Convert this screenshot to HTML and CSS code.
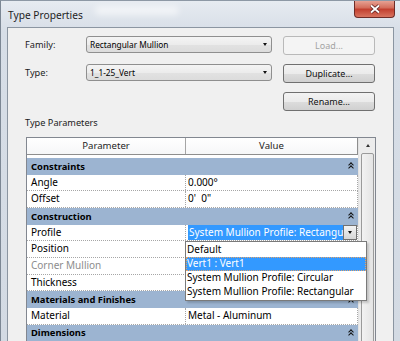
FILE: index.html
```html
<!DOCTYPE html>
<html lang="en">
<head>
    <meta charset="UTF-8">
    <meta name="viewport" content="width=device-width, initial-scale=1.0">
    <title>Type Properties</title>
    <link rel="stylesheet" href="styles.css">
</head>
<body>
    <div class="window">
        <div class="titlebar">
            <span class="title">Type Properties</span>
            <span class="ghost"></span>
            <span class="close-btn">
                <svg width="12" height="10" viewBox="0 0 12 10">
                    <path d="M2 1.5 L10 8.5 M10 1.5 L2 8.5" stroke="#5a2020" stroke-width="3.4" fill="none"/>
                    <path d="M2 1.5 L10 8.5 M10 1.5 L2 8.5" stroke="#fff" stroke-width="1.8" fill="none"/>
                </svg>
            </span>
        </div>

        <div class="client">
            <div class="form">
                <label>Family:</label>
                <div class="combo"><span>Rectangular Mullion</span><i class="arrow"></i></div>
                <button class="btn" disabled>Load...</button>

                <label>Type:</label>
                <div class="combo"><span>1_1-25_Vert</span><i class="arrow"></i></div>
                <button class="btn">Duplicate...</button>

                <span></span>
                <span></span>
                <button class="btn">Rename...</button>
            </div>

            <div class="section-label">Type Parameters</div>

            <div class="table">
                <div class="params">
                    <div class="head">
                        <div class="head-name">Parameter</div>
                        <div class="head-value">Value</div>
                    </div>
                    <div class="rows">
                        <div class="group">Constraints <i class="collapse"></i></div>
                        <div class="row"><div class="name">Angle</div><div class="value">0.000°</div></div>
                        <div class="row"><div class="name">Offset</div><div class="value">0'&nbsp; 0"</div></div>

                        <div class="group">Construction <i class="collapse"></i></div>
                        <div class="row">
                            <div class="name">Profile</div>
                            <div class="value">
                                <div class="editor">
                                    <span class="editor-text">System Mullion Profile: Rectangular</span>
                                    <span class="editor-btn"><i class="arrow"></i></span>
                                </div>
                                <ul class="dropdown">
                                    <li>Default</li>
                                    <li class="selected">Vert1 : Vert1</li>
                                    <li>System Mullion Profile: Circular</li>
                                    <li>System Mullion Profile: Rectangular</li>
                                </ul>
                            </div>
                        </div>
                        <div class="row"><div class="name">Position</div><div class="value"></div></div>
                        <div class="row"><div class="name disabled">Corner Mullion</div><div class="value"></div></div>
                        <div class="row"><div class="name">Thickness</div><div class="value"></div></div>

                        <div class="group">Materials and Finishes <i class="collapse"></i></div>
                        <div class="row"><div class="name">Material</div><div class="value">Metal - Aluminum</div></div>

                        <div class="group">Dimensions <i class="collapse"></i></div>
                    </div>
                </div>
                <div class="scrollbar">
                    <div class="scroll-up"><i class="up-arrow"></i></div>
                    <div class="thumb"></div>
                </div>
            </div>
        </div>
    </div>
</body>
</html>
```
FILE: styles.css
```css
html, body {
    margin: 0;
    padding: 0;
    width: 400px;
    height: 341px;
    overflow: hidden;
    background: #dde3ea;
}
body {
    font-family: "Noto Sans", sans-serif;
    color: #000;
}
.window {
    height: 341px;
    box-sizing: border-box;
    border-top: 1px solid #8d98a5;
    border-left: 1px solid #7c8794;
    padding: 0 6px 0 6px;
    background: linear-gradient(#e6ebf1, #d7dee7 30px, #d3dae3);
    overflow: hidden;
}

/* title bar */
.titlebar {
    height: 26px;
    display: flex;
    align-items: flex-start;
}
.title {
    font-size: 10.2px;
    line-height: 12px;
    margin: 8px 0 0 1px;
    color: #1e1e1e;
}
.ghost {
    width: 84px;
    height: 9px;
    margin: 5px 0 0 12px;
    border-radius: 5px;
    background: rgba(255, 255, 255, 0.55);
    filter: blur(3px);
}
.close-btn {
    margin-left: auto;
    margin-right: -1px;
    margin-top: -1px;
    width: 41px;
    height: 18px;
    box-sizing: border-box;
    border: 1px solid #6e2c27;
    border-top: none;
    border-radius: 0 0 4px 4px;
    background: linear-gradient(#e9a99b, #d46e5c 45%, #c2402f 55%, #d8735f);
    display: flex;
    align-items: center;
    justify-content: center;
}

/* dialog client area */
.client {
    height: 314px;
    background: #f0f0f0;
    border: 1px solid #8b95a1;
    border-bottom: none;
    overflow: hidden;
}

.form {
    display: grid;
    grid-template-columns: 50px 186px 92px;
    grid-auto-rows: 18px;
    column-gap: 11px;
    row-gap: 10px;
    margin: 8px 0 0 17px;
}
.form label {
    font-size: 9.2px;
    line-height: 18px;
    color: #1b1b1b;
}
.combo {
    height: 17px;
    box-sizing: border-box;
    border: 1px solid #8f8f8f;
    border-radius: 3px;
    background: linear-gradient(#f4f4f4, #ececec 50%, #e2e2e2 51%, #dcdcdc);
    display: flex;
    align-items: center;
    padding: 0 4px 0 3px;
    font-size: 8.3px;
}
.combo span {
    flex: 1;
}
.arrow {
    width: 0;
    height: 0;
    border-left: 2.5px solid transparent;
    border-right: 2.5px solid transparent;
    border-top: 3px solid #111;
}
.btn {
    height: 19px;
    margin: 0;
    padding: 0;
    font-family: "Noto Sans", sans-serif;
    font-size: 9px;
    color: #111;
    border: 1px solid #707070;
    border-radius: 3px;
    background: linear-gradient(#f3f3f3, #ebebeb 50%, #dddddd 51%, #d0d0d0);
}
.btn:disabled {
    color: #a3a3a3;
    border-color: #b9b9b9;
    background: #f4f4f4;
}

.section-label {
    margin: 6px 0 0 17px;
    font-size: 9.2px;
    line-height: 14px;
    color: #1b1b1b;
}

/* property grid */
.table {
    margin: 7px 0 0 18px;
    width: 350px;
    height: 204px;
    box-sizing: border-box;
    border: 1px solid #828790;
    border-bottom: none;
    background: #fff;
    display: flex;
    overflow: hidden;
}
.params {
    width: 331px;
    flex: none;
    font-size: 10px;
}
.head {
    display: flex;
    height: 17px;
    box-sizing: border-box;
    border-bottom: 1px solid #8e8e8e;
    border-right: 1px solid #8e8e8e;
    background: linear-gradient(#ffffff, #f6f7f8);
    font-size: 9.6px;
    line-height: 16px;
    color: #1e1e1e;
}
.head-name {
    width: 158px;
    flex: none;
    border-right: 1px solid #a5a5a5;
    text-align: center;
}
.head-value {
    flex: 1;
    text-align: center;
}
.rows {
    margin-top: 3px;
}
.group {
    height: 16.67px;
    display: flex;
    align-items: center;
    padding-left: 4px;
    background: #9cb4d1;
    font-size: 9.4px;
    font-weight: bold;
}
.collapse {
    margin-left: auto;
    margin-right: 5px;
    width: 5px;
    height: 7px;
    position: relative;
}
.collapse::before,
.collapse::after {
    content: "";
    position: absolute;
    left: 0.5px;
    width: 3px;
    height: 3px;
    border-left: 1px solid #111;
    border-top: 1px solid #111;
    transform: rotate(45deg);
}
.collapse::before { top: 0.5px; }
.collapse::after { top: 3.5px; }

.row {
    height: 16.67px;
    box-sizing: border-box;
    display: flex;
    border-bottom: 1px dotted #a6a6a6;
    border-right: 1px dotted #a6a6a6;
}
.name {
    width: 159px;
    flex: none;
    box-sizing: border-box;
    border-right: 1px dotted #a6a6a6;
    padding-left: 4px;
    line-height: 15.5px;
}
.name.disabled {
    color: #8d8d8d;
}
.value {
    flex: 1;
    min-width: 0;
    padding-left: 2px;
    line-height: 15.5px;
    position: relative;
    white-space: nowrap;
}

.editor {
    display: flex;
    height: 15px;
}
.editor-text {
    flex: 1;
    min-width: 0;
    overflow: hidden;
    background: #3399ff;
    color: #fff;
    line-height: 14px;
    padding-left: 1px;
}
.editor-btn {
    width: 14px;
    height: 15px;
    flex: none;
    box-sizing: border-box;
    border: 1px solid #707070;
    background: linear-gradient(#f3f3f3, #e4e4e4 50%, #d6d6d6);
    display: flex;
    align-items: center;
    justify-content: center;
}

.dropdown {
    position: absolute;
    left: -1px;
    top: 16px;
    width: 182px;
    margin: 0;
    padding: 1px 0;
    list-style: none;
    background: #fff;
    border: 1px solid #7a7a7a;
    box-sizing: border-box;
    box-shadow: 2px 2px 2px rgba(0, 0, 0, 0.18);
    z-index: 2;
}
.dropdown li {
    height: 14px;
    line-height: 13px;
    padding-left: 1px;
    box-sizing: border-box;
}
.dropdown li.selected {
    background: #3399ff;
    color: #fff;
    outline: 1px dotted #e3a36a;
    outline-offset: -1px;
}

/* scrollbar */
.scrollbar {
    width: 17px;
    flex: none;
    background: #ececec;
    border-left: 1px solid #e2e2e2;
}
.scroll-up {
    height: 15px;
    display: flex;
    align-items: center;
    justify-content: center;
}
.up-arrow {
    width: 0;
    height: 0;
    border-left: 2.5px solid transparent;
    border-right: 2.5px solid transparent;
    border-bottom: 3px solid #333;
}
.thumb {
    margin: 0 2px;
    height: 260px;
    border: 1px solid #9a9a9a;
    border-radius: 2px;
    background: linear-gradient(90deg, #f2f2f2, #e4e4e4);
}
```
